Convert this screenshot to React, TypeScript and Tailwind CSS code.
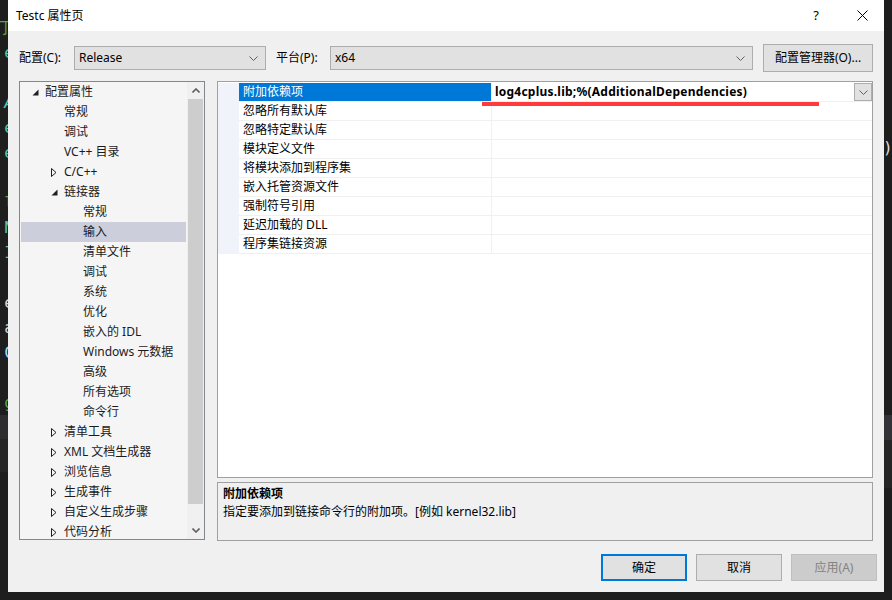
import React from "react";

const FONT = "font-['Noto_Sans','Noto_Sans_CJK_SC',sans-serif]";

type TreeItem = { label: string; level: 0 | 1 | 2; arrow?: "open" | "closed"; selected?: boolean };

const treeItems: TreeItem[] = [
  { label: "配置属性", level: 0, arrow: "open" },
  { label: "常规", level: 1 },
  { label: "调试", level: 1 },
  { label: "VC++ 目录", level: 1 },
  { label: "C/C++", level: 1, arrow: "closed" },
  { label: "链接器", level: 1, arrow: "open" },
  { label: "常规", level: 2 },
  { label: "输入", level: 2, selected: true },
  { label: "清单文件", level: 2 },
  { label: "调试", level: 2 },
  { label: "系统", level: 2 },
  { label: "优化", level: 2 },
  { label: "嵌入的 IDL", level: 2 },
  { label: "Windows 元数据", level: 2 },
  { label: "高级", level: 2 },
  { label: "所有选项", level: 2 },
  { label: "命令行", level: 2 },
  { label: "清单工具", level: 1, arrow: "closed" },
  { label: "XML 文档生成器", level: 1, arrow: "closed" },
  { label: "浏览信息", level: 1, arrow: "closed" },
  { label: "生成事件", level: 1, arrow: "closed" },
  { label: "自定义生成步骤", level: 1, arrow: "closed" },
  { label: "代码分析", level: 1, arrow: "closed" },
];

const levelPad: Record<number, string> = { 0: "pl-[8px]", 1: "pl-[27px]", 2: "pl-[46px]" };

const props = [
  "附加依赖项",
  "忽略所有默认库",
  "忽略特定默认库",
  "模块定义文件",
  "将模块添加到程序集",
  "嵌入托管资源文件",
  "强制符号引用",
  "延迟加载的 DLL",
  "程序集链接资源",
];

const leftCode: { c: string; color: string }[] = [
  { c: "丁", color: "text-[#57a64a]" },
  { c: "e", color: "text-[#4ec9b0]" },
  { c: "", color: "" },
  { c: "A", color: "text-[#4ec9b0] italic" },
  { c: "e", color: "text-[#4ec9b0]" },
  { c: "e", color: "text-[#4ec9b0]" },
  { c: "", color: "" },
  { c: "l", color: "text-[#57a64a]" },
  { c: "N", color: "text-[#4ec9b0]" },
  { c: "I", color: "text-[#4ec9b0]" },
  { c: "", color: "" },
  { c: "e", color: "text-[#dcdcdc]" },
  { c: "a", color: "text-[#dcdcdc]" },
  { c: "C", color: "text-[#9cdcfe]" },
  { c: "", color: "" },
  { c: "g", color: "text-[#57a64a]" },
];

function Chevron({ color = "#606060" }: { color?: string }) {
  return (
    <svg width="9" height="5" viewBox="0 0 9 5">
      <path d="M0.5 0.5 L4.5 4.5 L8.5 0.5" fill="none" stroke={color} strokeWidth="1" />
    </svg>
  );
}

function Select({ value, w }: { value: string; w: string }) {
  return (
    <div className={`${w} h-[24px] bg-[#e1e1e1] border border-[#adadad] flex items-center pl-[4px] pr-[7px]`}>
      <span className="flex-1 text-[12px] text-black">{value}</span>
      <Chevron />
    </div>
  );
}

function TreeArrow({ kind }: { kind?: "open" | "closed" }) {
  if (kind === "open")
    return (
      <svg width="7" height="7" viewBox="0 0 7 7">
        <path d="M6.5 0.5 L6.5 6.5 L0.5 6.5 Z" fill="#1e1e1e" />
      </svg>
    );
  if (kind === "closed")
    return (
      <svg width="6" height="9" viewBox="0 0 6 9">
        <path d="M0.5 0.5 L5 4.5 L0.5 8.5 Z" fill="none" stroke="#1e1e1e" strokeWidth="1" />
      </svg>
    );
  return null;
}

function ScrollCaret({ up }: { up: boolean }) {
  return (
    <svg width="8" height="5" viewBox="0 0 8 5">
      <path
        d={up ? "M0.5 4.5 L4 1 L7.5 4.5" : "M0.5 0.5 L4 4 L7.5 0.5"}
        fill="none"
        stroke="#606060"
        strokeWidth="1.6"
      />
    </svg>
  );
}

export default function App() {
  return (
    <div className={`w-[892px] h-[600px] bg-[#1e1e1e] flex overflow-hidden ${FONT}`}>
      {/* left desktop strip */}
      <div className="w-[8px] h-full flex flex-col overflow-hidden font-['DejaVu_Sans_Mono',monospace]">
        <div className="h-[15px]" />
        {leftCode.map((l, i) => (
          <div key={i} className="h-[25px] flex items-center justify-end">
            <span className={`text-[16px] leading-none mr-[-6px] ${l.color}`}>{l.c}</span>
          </div>
        ))}
        <div className="h-[24px] bg-[#2d2d30]" />
        <div className="h-[33px] bg-[#252526]" />
      </div>

      {/* dialog */}
      <div className="w-[876px] h-[592px] bg-[#f0f0f0] flex flex-col">
        {/* title bar */}
        <div className="h-[31px] bg-white flex items-center pl-[8px]">
          <span className="flex-1 text-[12px] text-black">Testc 属性页</span>
          <span className="text-[13px] text-black mr-[38px]">?</span>
          <svg width="11" height="11" viewBox="0 0 11 11" className="mr-[16px]">
            <path d="M0.5 0.5 L10.5 10.5 M10.5 0.5 L0.5 10.5" stroke="#000" strokeWidth="1" />
          </svg>
        </div>

        <div className="flex-1 flex flex-col px-[11px]">
          {/* config row */}
          <div className="mt-[13px] h-[28px] flex items-center text-[12px] text-black">
            <span className="w-[55px]">配置(C):</span>
            <Select value="Release" w="w-[192px]" />
            <span className="ml-[10px] w-[54px]">平台(P):</span>
            <Select value="x64" w="w-[423px]" />
            <div className="ml-auto w-[110px] h-[28px] bg-[#e1e1e1] border border-[#adadad] flex items-center justify-center">
              配置管理器(O)...
            </div>
          </div>

          {/* main area */}
          <div className="mt-[9px] h-[460px] flex gap-[12px]">
            {/* tree */}
            <div className="w-[186px] h-[459px] border border-[#828790] bg-[#f5f5f5] flex">
              <div className="flex-1 overflow-hidden pl-[1px] pr-[1px]">
                {treeItems.map((t, i) => (
                  <div
                    key={i}
                    className={`h-[20px] flex items-center text-[12px] text-[#1b1b1b] ${levelPad[t.level]} ${
                      t.selected ? "bg-[#cccedb]" : ""
                    }`}
                  >
                    <div className="w-[12px] flex items-center justify-center">
                      <TreeArrow kind={t.arrow} />
                    </div>
                    <span className="ml-[4px] whitespace-nowrap">{t.label}</span>
                  </div>
                ))}
              </div>
              <div className="w-[17px] bg-[#f0f0f0] flex flex-col">
                <div className="h-[17px] flex items-center justify-center">
                  <ScrollCaret up />
                </div>
                <div className="h-[405px] bg-[#cdcdcd] mx-[1px]" />
                <div className="flex-1" />
                <div className="h-[17px] flex items-center justify-center">
                  <ScrollCaret up={false} />
                </div>
              </div>
            </div>

            {/* right column */}
            <div className="flex-1 flex flex-col">
              <div className="relative h-[397px] border border-[#a0a0a0] bg-white pt-[1px]">
                {props.map((p, i) => (
                  <div key={i} className="h-[19px] flex text-[12px]">
                    <div className="w-[21px] bg-[#f0f4fa]" />
                    <div
                      className={`w-[252px] flex items-center pl-[4px] border-b ${
                        i === 0 ? "bg-[#0078d7] text-white border-[#f0f0f0]" : "text-black border-[#f0f0f0]"
                      }`}
                    >
                      {p}
                    </div>
                    <div className="w-[1px] bg-[#f0f0f0]" />
                    <div className="flex-1 flex items-center border-b border-[#f0f0f0]">
                      {i === 0 && (
                        <>
                          <span className="flex-1 pl-[3px] font-bold text-black whitespace-nowrap tracking-[0.23px]">
                            log4cplus.lib;%(AdditionalDependencies)
                          </span>
                          <div className="w-[18px] h-[18px] bg-[#e1e1e1] border border-[#adadad] flex items-center justify-center self-start">
                            <Chevron />
                          </div>
                        </>
                      )}
                    </div>
                  </div>
                ))}
                <div className="absolute left-[264px] top-[20px] w-[337px] h-[4px] bg-[#ff3b3b]" />
              </div>
              <div className="mt-[4px] h-[59px] border border-[#a0a0a0] bg-[#f0f0f0] pl-[5px] pt-[2px] text-[12px] text-black">
                <div className="font-bold h-[18px] flex items-center">附加依赖项</div>
                <div className="h-[18px] flex items-center">指定要添加到链接命令行的附加项。[例如 kernel32.lib]</div>
              </div>
            </div>
          </div>

          {/* buttons */}
          <div className="mt-[13px] flex justify-end gap-[9px] mr-[-4px] text-[12px]">
            <div className="w-[86px] h-[27px] bg-[#e1e1e1] border-2 border-[#0078d7] flex items-center justify-center text-black">
              确定
            </div>
            <div className="w-[86px] h-[27px] bg-[#e1e1e1] border border-[#adadad] flex items-center justify-center text-black">
              取消
            </div>
            <div className="w-[86px] h-[27px] bg-[#cccccc] border border-[#bfbfbf] flex items-center justify-center text-[#838383]">
              应用(A)
            </div>
          </div>
        </div>
      </div>

      {/* right desktop strip */}
      <div className="w-[8px] h-full flex flex-col overflow-hidden">
        <div className="h-[136px]" />
        <div className="h-[24px] flex items-center">
          <span className="text-[16px] leading-none text-[#dcdcdc] ml-[-1px] font-['DejaVu_Sans_Mono',monospace]">)</span>
        </div>
        <div className="h-[255px]" />
        <div className="h-[25px] bg-[#333337]" />
        <div className="h-[48px] bg-[#252526]" />
      </div>
    </div>
  );
}
